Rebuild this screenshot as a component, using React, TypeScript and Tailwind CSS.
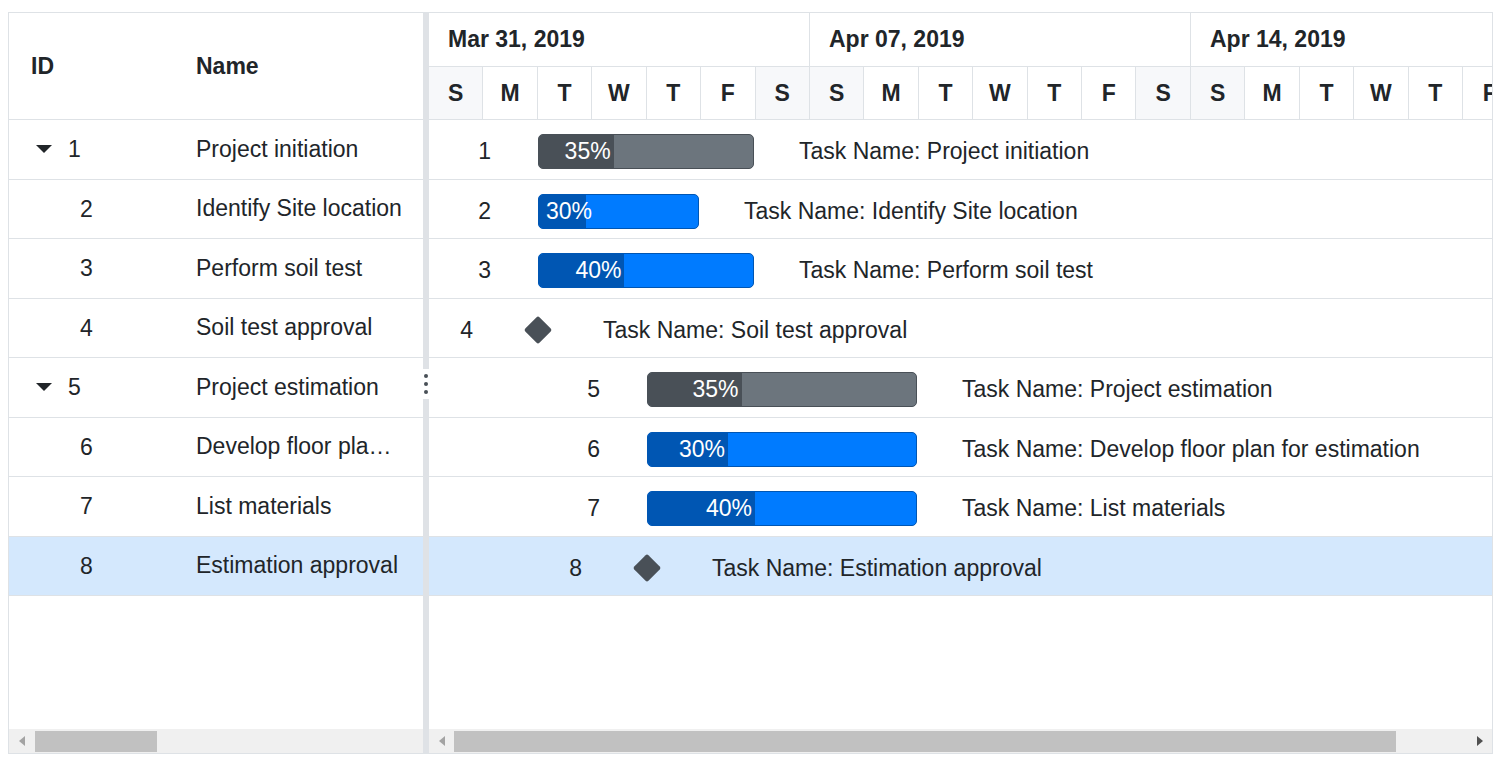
import React from 'react';

type Row = {
  id: number;
  name: string;
  kind: 'parent' | 'child' | 'milestone';
  left: number;
  width?: number;
  progress?: number;
  selected?: boolean;
};

const rows: Row[] = [
  { id: 1, name: 'Project initiation', kind: 'parent', left: 109, width: 216, progress: 35 },
  { id: 2, name: 'Identify Site location', kind: 'child', left: 109, width: 161, progress: 30 },
  { id: 3, name: 'Perform soil test', kind: 'child', left: 109, width: 216, progress: 40 },
  { id: 4, name: 'Soil test approval', kind: 'milestone', left: 109 },
  { id: 5, name: 'Project estimation', kind: 'parent', left: 218, width: 270, progress: 35 },
  { id: 6, name: 'Develop floor plan for estimation', kind: 'child', left: 218, width: 270, progress: 30 },
  { id: 7, name: 'List materials', kind: 'child', left: 218, width: 270, progress: 40 },
  { id: 8, name: 'Estimation approval', kind: 'milestone', left: 218, selected: true },
];

const weeks = ['Mar 31, 2019', 'Apr 07, 2019', 'Apr 14, 2019'];
const days = ['S', 'M', 'T', 'W', 'T', 'F', 'S'];

function ExpandArrow() {
  return (
    <svg width="16" height="9" viewBox="0 0 16 9">
      <polygon points="0,0 16,0 8,8" fill="#212529" />
    </svg>
  );
}

function ChartRow({ r }: { r: Row }) {
  const base = 'relative h-[59.5px] border-b border-[#dee2e6] ' + (r.selected ? 'bg-[#d4e8fd]' : 'bg-white');
  if (r.kind === 'milestone') {
    return (
      <div className={base}>
        <div
          className="absolute top-[14px] h-[35px] flex items-center -translate-x-full"
          style={{ left: r.left - 65 }}
        >
          {r.id}
        </div>
        <div
          className="absolute top-[21.5px] w-[20px] h-[20px] bg-[#495057] rotate-45 rounded-[2px]"
          style={{ left: r.left - 10 }}
        />
        <div className="absolute top-[14px] h-[35px] flex items-center whitespace-nowrap" style={{ left: r.left + 65 }}>
          Task Name: {r.name}
        </div>
      </div>
    );
  }
  const w = r.width || 0;
  const pw = (w * (r.progress || 0)) / 100;
  const parent = r.kind === 'parent';
  const textStyle: React.CSSProperties = pw - 50 >= 7 ? { left: pw - 50 } : { left: 7 };
  return (
    <div className={base}>
      <div
        className="absolute top-[14px] h-[35px] flex items-center -translate-x-full"
        style={{ left: r.left - 47 }}
      >
        {r.id}
      </div>
      <div
        className={
          'absolute top-[14px] h-[35px] rounded-[5px] border overflow-hidden ' +
          (parent ? 'bg-[#6c757d] border-[#495057]' : 'bg-[#007bff] border-[#0056b3]')
        }
        style={{ left: r.left, width: w }}
      >
        <div
          className={'absolute left-0 top-0 bottom-0 ' + (parent ? 'bg-[#495057]' : 'bg-[#0056b3]')}
          style={{ width: pw - 1 }}
        />
        <div className="absolute top-0 bottom-0 flex items-center text-white whitespace-nowrap" style={textStyle}>
          {r.progress}%
        </div>
      </div>
      <div className="absolute top-[14px] h-[35px] flex items-center whitespace-nowrap" style={{ left: r.left + w + 45 }}>
        Task Name: {r.name}
      </div>
    </div>
  );
}

function LeftTriangle({ color }: { color: string }) {
  return (
    <svg width="6" height="10" viewBox="0 0 6 10">
      <polygon points="6,0 6,10 0,5" fill={color} />
    </svg>
  );
}

function RightTriangle({ color }: { color: string }) {
  return (
    <svg width="6" height="10" viewBox="0 0 6 10">
      <polygon points="0,0 0,10 6,5" fill={color} />
    </svg>
  );
}

export default function App() {
  return (
    <div
      className="w-[1504px] h-[762px] bg-white pt-[12px] pl-[8px] text-[#212529] text-[23px] leading-none"
      style={{ fontFamily: '"Liberation Sans", Arial, sans-serif' }}
    >
      <div className="w-[1485px] h-[742px] border border-[#dee2e6] flex overflow-hidden">
        {/* Left grid */}
        <div className="w-[414px] shrink-0 flex flex-col">
          <div className="h-[107px] border-b border-[#dee2e6] flex items-center font-bold">
            <div className="w-[165px] pl-[22px]">ID</div>
            <div className="flex-1 pl-[22px]">Name</div>
          </div>
          <div className="flex-1">
            {rows.map((r) => (
              <div
                key={r.id}
                className={
                  'h-[59.5px] border-b border-[#dee2e6] flex items-center pt-[1px] ' + (r.selected ? 'bg-[#d4e8fd]' : '')
                }
              >
                <div className="w-[165px] shrink-0 flex items-center">
                  {r.kind === 'parent' ? (
                    <div className="pl-[22px] flex items-center">
                      <div className="w-[26px] flex justify-center">
                        <ExpandArrow />
                      </div>
                      <span className="ml-[11px]">{r.id}</span>
                    </div>
                  ) : (
                    <span className="pl-[71px]">{r.id}</span>
                  )}
                </div>
                <div className="flex-1 min-w-0 pl-[22px] pr-[20px] truncate leading-[1.3]">{r.name}</div>
              </div>
            ))}
          </div>
          <div className="h-[24px] bg-[#f0f0f0] flex items-center">
            <div className="w-[26px] flex justify-center">
              <LeftTriangle color="#a3a3a3" />
            </div>
            <div className="w-[122px] h-[21px] bg-[#c1c1c1]" />
          </div>
        </div>

        {/* Splitter */}
        <div className="relative w-[6px] shrink-0 bg-[#dfe2e6]">
          <div className="absolute left-0 top-[356px] w-[6px] h-[30px] bg-white flex flex-col items-center justify-center gap-[4px]">
            <div className="w-[4px] h-[4px] rounded-full bg-[#495057]" />
            <div className="w-[4px] h-[4px] rounded-full bg-[#495057]" />
            <div className="w-[4px] h-[4px] rounded-full bg-[#495057]" />
          </div>
        </div>

        {/* Chart */}
        <div className="flex-1 min-w-0 flex flex-col overflow-hidden">
          <div className="h-[54px] border-b border-[#dee2e6] flex overflow-hidden">
            {weeks.map((w) => (
              <div key={w} className="w-[381px] shrink-0 border-r border-[#dee2e6] pl-[19px] flex items-center font-bold">
                {w}
              </div>
            ))}
          </div>
          <div className="h-[53px] border-b border-[#dee2e6] flex overflow-hidden">
            {weeks.map((w) =>
              days.map((d, i) => (
                <div
                  key={w + i}
                  className={
                    'w-[54.4286px] shrink-0 border-r border-[#dee2e6] flex items-center justify-center font-bold ' +
                    (i === 0 || i === 6 ? 'bg-[#f7f8fa]' : 'bg-white')
                  }
                >
                  {d}
                </div>
              ))
            )}
          </div>
          <div className="flex-1">
            {rows.map((r) => (
              <ChartRow key={r.id} r={r} />
            ))}
          </div>
          <div className="h-[24px] bg-[#f0f0f0] flex items-center">
            <div className="w-[25px] flex justify-center">
              <LeftTriangle color="#a3a3a3" />
            </div>
            <div className="w-[942px] h-[21px] bg-[#c1c1c1]" />
            <div className="flex-1" />
            <div className="w-[25px] flex justify-center">
              <RightTriangle color="#505050" />
            </div>
          </div>
        </div>
      </div>
    </div>
  );
}
